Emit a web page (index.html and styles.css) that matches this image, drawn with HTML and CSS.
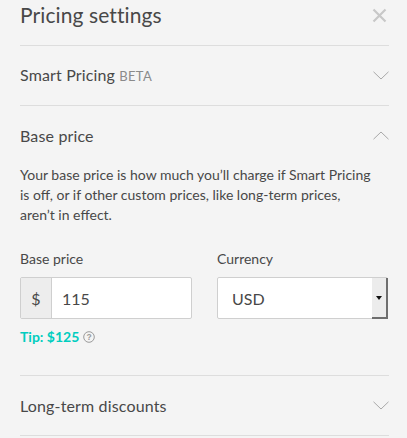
FILE: index.html
```html
<!DOCTYPE html>
<html>
<head>
<meta charset="utf-8">
<link rel="stylesheet" href="styles.css">
</head>
<body>
<div class="panel">
  <div class="header">
    <h1 class="title">Pricing settings</h1>
    <svg class="close" width="15" height="15" viewBox="0 0 15 15"><path d="M1.5 1.5 L13.5 13.5 M13.5 1.5 L1.5 13.5" stroke="#c8c8c8" stroke-width="2.2" fill="none"/></svg>
  </div>
  <div class="row">
    <span class="row-title">Smart Pricing <span class="beta">BETA</span></span>
    <svg class="chev" width="16" height="9" viewBox="0 0 16 9"><path d="M0.5 0.8 L8 8 L15.5 0.8" stroke="#a8a8a8" stroke-width="1" fill="none"/></svg>
  </div>
  <div class="section">
    <div class="row open">
      <span class="row-title">Base price</span>
      <svg class="chev" width="16" height="9" viewBox="0 0 16 9"><path d="M0.5 8.2 L8 1 L15.5 8.2" stroke="#a8a8a8" stroke-width="1" fill="none"/></svg>
    </div>
    <p class="desc">Your base price is how much you’ll charge if Smart Pricing is off, or if other custom prices, like long-term prices, aren’t in effect.</p>
    <div class="fields">
      <div class="field">
        <label class="label">Base price</label>
        <div class="input-group">
          <span class="addon">$</span>
          <span class="input">115</span>
        </div>
        <div class="tip">Tip: $125 <svg class="help" width="12" height="12" viewBox="0 0 12 12"><circle cx="6" cy="6" r="5.3" stroke="#9a9a9a" stroke-width="1" fill="none"/><text x="6" y="9" text-anchor="middle" font-size="8.5" fill="#9a9a9a" font-family="Liberation Sans, sans-serif">?</text></svg></div>
      </div>
      <div class="field">
        <label class="label">Currency</label>
        <div class="select">
          <span class="select-value">USD</span>
          <span class="select-btn"><svg width="6" height="4" viewBox="0 0 6 4"><path d="M0 0 L6 0 L3 4 Z" fill="#111"/></svg></span>
        </div>
      </div>
    </div>
  </div>
  <div class="row">
    <span class="row-title">Long-term discounts</span>
    <svg class="chev" width="16" height="9" viewBox="0 0 16 9"><path d="M0.5 0.8 L8 8 L15.5 0.8" stroke="#a8a8a8" stroke-width="1" fill="none"/></svg>
  </div>
</div>
</body>
</html>
```

FILE: styles.css
```css
html, body {
  margin: 0;
  padding: 0;
  background: #f4f4f4;
}
body {
  font-family: "Lato", "Noto Sans", sans-serif;
  color: #484848;
}
.panel {
  width: 369px;
  margin-left: 20px;
}
.header {
  height: 46px;
  border-bottom: 1px solid #dddddd;
  box-sizing: border-box;
  display: flex;
  justify-content: space-between;
  align-items: flex-start;
}
.title {
  margin: 0;
  font-size: 21px;
  font-weight: 400;
  line-height: 29px;
  letter-spacing: 0.1px;
}
.close {
  margin-top: 8px;
  margin-right: 2px;
}
.row {
  height: 60px;
  border-bottom: 1px solid #dddddd;
  box-sizing: border-box;
  display: flex;
  align-items: center;
  justify-content: space-between;
}
.section {
  border-bottom: 1px solid #dddddd;
  padding-bottom: 29px;
}
.row.open {
  border-bottom: none;
  height: 59px;
}
.row-title {
  font-size: 16px;
  line-height: 20px;
  letter-spacing: 0.15px;
}
.beta {
  font-size: 13px;
  color: #8a8a8a;
  letter-spacing: 0.3px;
}
.desc {
  margin: 0;
  font-size: 14px;
  line-height: 20px;
  padding-right: 15px;
}
.fields {
  display: grid;
  grid-template-columns: 172px 171px;
  column-gap: 25px;
  margin-top: 24px;
}
.label {
  display: block;
  font-size: 14px;
  line-height: 20px;
  margin-bottom: 8px;
}
.input-group {
  display: flex;
  height: 42px;
  border: 1px solid #cfcfcf;
  border-radius: 2px;
  box-sizing: border-box;
  background: #fff;
}
.addon {
  width: 30px;
  background: #ededed;
  border-right: 1px solid #cfcfcf;
  display: flex;
  align-items: center;
  justify-content: center;
  font-size: 16px;
}
.input {
  display: flex;
  align-items: center;
  padding-left: 10px;
  font-size: 16px;
}
.tip {
  margin-top: 9px;
  font-size: 14px;
  font-weight: 700;
  color: #00cdbf;
  display: flex;
  align-items: center;
  gap: 4px;
  line-height: 18px;
}
.select {
  display: flex;
  height: 42px;
  border: 1px solid #cfcfcf;
  border-radius: 2px;
  box-sizing: border-box;
  background: #fff;
}
.select-value {
  flex: 1;
  display: flex;
  align-items: center;
  padding-left: 14px;
  font-size: 16px;
}
.select-btn {
  width: 14px;
  background: #ececec;
  border-right: 2px solid #6e6e6e;
  border-bottom: 2px solid #6e6e6e;
  display: flex;
  align-items: center;
  justify-content: center;
  margin: 0 -1px -1px 0;
}
```
